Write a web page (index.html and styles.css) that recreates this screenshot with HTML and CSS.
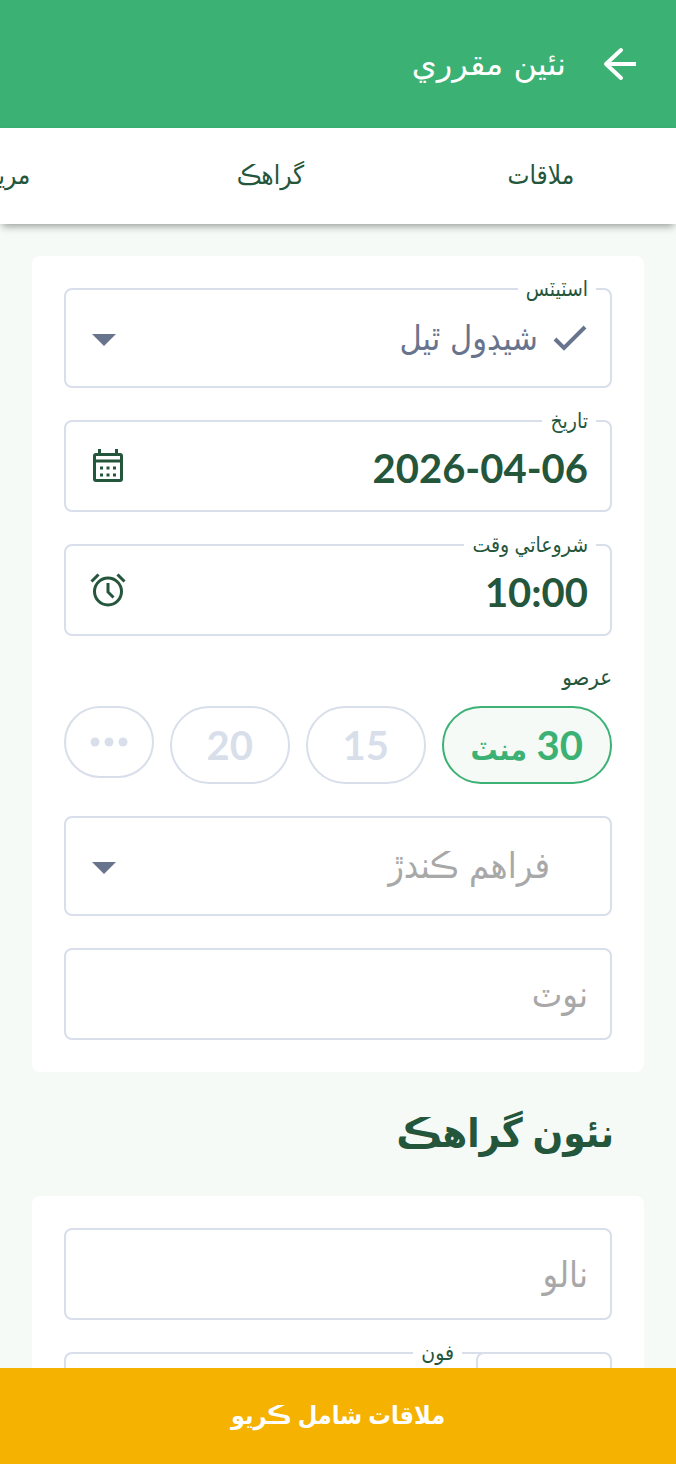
FILE: index.html
```html
<!DOCTYPE html>
<html lang="sd" dir="rtl">
<head>
<meta charset="utf-8">
<meta name="viewport" content="width=device-width, initial-scale=1">
<title>نئين مقرري</title>
<link rel="stylesheet" href="styles.css">
</head>
<body>
<header class="appbar">
  <button class="back" type="button" aria-label="واپس">
    <svg viewBox="0 0 48 48" fill="none" stroke="currentColor" stroke-width="4"><path d="M40 24H11"/><path d="M25 10L10 24l15 14" stroke-linecap="round" stroke-linejoin="round"/></svg>
  </button>
  <h1 class="appbar-title">نئين مقرري</h1>
</header>
<nav class="tabs">
  <a class="tab" href="#visit">ملاقات</a>
  <a class="tab" href="#client">گراهڪ</a>
  <a class="tab" href="#patient">مريض</a>
</nav>
<main class="content">
  <section class="card" id="visit">
    <div class="field field-tall">
      <label class="field-label" for="status">اسٽيٽس</label>
      <svg class="check" viewBox="0 0 36 36" fill="none" stroke="currentColor" stroke-width="4"><path d="M3 19l9 9L33 7"/></svg>
      <select class="control" id="status"><option>شيڊول ٿيل</option></select>
      <svg class="caret" viewBox="0 0 24 16" fill="currentColor"><path d="M0 4h24L12 16z"/></svg>
    </div>
    <div class="field">
      <label class="field-label" for="date">تاريخ</label>
      <input class="control number" id="date" type="text" value="2026-04-06">
      <svg class="icon" viewBox="0 0 36 36" fill="none" stroke="currentColor" stroke-width="3"><rect x="4.500" y="6.500" width="27" height="26" rx="1.500"/><path d="M4 13h28M9.500 1v5M26.500 1v5M10 20h3m3.500 0h3m3.500 0h3M10 27h3m3.500 0h3m3.500 0h3"/></svg>
    </div>
    <div class="field">
      <label class="field-label" for="time">شروعاتي وقت</label>
      <input class="control number" id="time" type="text" value="10:00">
      <svg class="icon" viewBox="0 0 36 36" fill="none" stroke="currentColor" stroke-width="3"><circle cx="18" cy="19.500" r="13.500"/><path d="M18 11v9l5.500 5.500M1.500 9.500l7-7M34.500 9.500l-7-7"/></svg>
    </div>
    <div class="duration" role="group" aria-labelledby="duration-label">
      <span class="duration-label" id="duration-label">عرصو</span>
      <div class="chips">
        <button class="chip chip-selected" type="button" aria-pressed="true">30 <span class="unit">منٽ</span></button>
        <button class="chip" type="button">15</button>
        <button class="chip" type="button">20</button>
        <button class="chip chip-more" type="button" aria-label="وڌيڪ"><svg viewBox="0 0 38 10" fill="currentColor"><circle cx="5" cy="5" r="4.500"/><circle cx="19" cy="5" r="4.500"/><circle cx="33" cy="5" r="4.500"/></svg></button>
      </div>
    </div>
    <div class="field field-tall field-provider">
      <select class="control placeholder" aria-label="فراهم ڪندڙ"><option>فراهم ڪندڙ</option></select>
      <svg class="caret" viewBox="0 0 24 16" fill="currentColor"><path d="M0 4h24L12 16z"/></svg>
    </div>
    <div class="field">
      <input class="control" type="text" placeholder="نوٽ" aria-label="نوٽ">
    </div>
  </section>
  <h2 class="heading">نئون گراهڪ</h2>
  <section class="card" id="client">
    <div class="field">
      <input class="control" type="text" placeholder="نالو" aria-label="نالو">
    </div>
    <div class="phone-row">
      <div class="field field-code"><input class="control" type="text" aria-label="ملڪ جو ڪوڊ"></div>
      <div class="field field-phone">
        <label class="field-label" for="phone">فون</label>
        <input class="control" id="phone" type="tel">
      </div>
    </div>
  </section>
</main>
<button class="submit" type="button">ملاقات شامل ڪريو</button>
</body>
</html>
```
FILE: styles.css
```css
:root {
  --green: #3cb174;
  --ink: #24563b;
  --line: #d8dfeb;
  --slate: #68748d;
}
* { box-sizing: border-box; }
body {
  margin: 0;
  height: 100vh;
  display: flex;
  flex-direction: column;
  background: #f5faf6;
  color: var(--ink);
  font-family: Lato, "DejaVu Sans Condensed", "DejaVu Sans", sans-serif;
}
button, input, select { font: inherit; color: inherit; }
.appbar {
  flex: none;
  height: 128px;
  padding: 0 32px;
  display: flex;
  align-items: center;
  gap: 30px;
  background: var(--green);
  color: #fff;
}
.back {
  width: 48px;
  height: 48px;
  padding: 0;
  border: 0;
  background: none;
}
.back svg { display: block; width: 48px; height: 48px; }
.appbar-title {
  margin: 0;
  font-family: "DejaVu Sans", sans-serif;
  font-size: 32px;
  font-weight: 400;
}
.tabs {
  flex: none;
  height: 96px;
  display: flex;
  overflow: hidden;
  background: #fff;
  box-shadow: 0 4px 8px -2px rgba(0, 0, 0, .4);
  z-index: 1;
}
.tab {
  flex: 0 0 40%;
  display: flex;
  align-items: center;
  justify-content: center;
  padding-bottom: 4px;
  color: inherit;
  font-size: 26px;
  text-decoration: none;
}
.content {
  flex: 1;
  min-height: 0;
  padding: 32px;
  overflow: hidden auto;
  scrollbar-width: none;
}
.card {
  display: flex;
  flex-direction: column;
  gap: 32px;
  padding: 32px;
  border-radius: 8px;
  background: #fff;
}
.field {
  position: relative;
  height: 92px;
  padding: 0 22px;
  display: flex;
  align-items: center;
  gap: 14px;
  border: 2px solid var(--line);
  border-radius: 8px;
}
.field-tall { height: 100px; color: var(--slate); }
.field-provider { padding-right: 60px; }
.field-label {
  position: absolute;
  top: -14px;
  right: 14px;
  padding: 0 8px;
  background: #fff;
  color: var(--ink);
  font-size: 21px;
  line-height: 24px;
}
.control {
  flex: 1;
  min-width: 0;
  width: 100%;
  height: 64px;
  padding: 0;
  border: 0;
  outline: 0;
  background: none;
  appearance: none;
  font-family: "DejaVu Sans Condensed", "DejaVu Sans", sans-serif;
  font-size: 36px;
  line-height: 60px;
}
.control::placeholder { line-height: 60px; overflow: visible; }
.control::placeholder, .placeholder { color: #a8a8a8; opacity: 1; }
.number {
  padding: 4px 0 0;
  direction: ltr;
  text-align: right;
  font-family: Lato, sans-serif;
  font-size: 40px;
  font-weight: 700;
}
#status { font-size: 34px; }
.check { flex: none; width: 36px; height: 36px; }
.caret { flex: none; width: 24px; height: 16px; margin-left: 4px; }
.icon { flex: none; width: 36px; height: 36px; margin-left: 2px; }
.duration { display: flex; flex-direction: column; gap: 20px; }
.duration-label { font-size: 22px; line-height: 18px; }
.chips { display: flex; justify-content: space-between; align-items: flex-start; }
.chip {
  height: 78px;
  padding: 0 35px;
  border: 2px solid var(--line);
  border-radius: 39px;
  background: #fff;
  color: var(--line);
  font-size: 40px;
  font-weight: 700;
}
.chip-selected {
  padding: 0 27px;
  border-color: var(--green);
  background: #f5faf6;
  color: var(--green);
}
.unit { font-size: 30px; }
.chip-more { height: 72px; padding: 0 24px; }
.chip-more svg { display: block; width: 38px; height: 10px; }
.heading {
  margin: 0;
  padding: 0 30px 4px;
  font-size: 40px;
  line-height: 120px;
}
.phone-row { display: flex; }
.field-code { flex: 0 0 136px; }
.field-phone { flex: 1; margin-right: -6px; border-right: 0; border-top-right-radius: 0; border-bottom-right-radius: 0; }
.field-phone .field-label { right: 20px; }
.submit {
  flex: none;
  height: 96px;
  padding: 0 16px 4px;
  border: 0;
  background: #f5b201;
  color: #fff;
  font-size: 25px;
  font-weight: 700;
}
```
